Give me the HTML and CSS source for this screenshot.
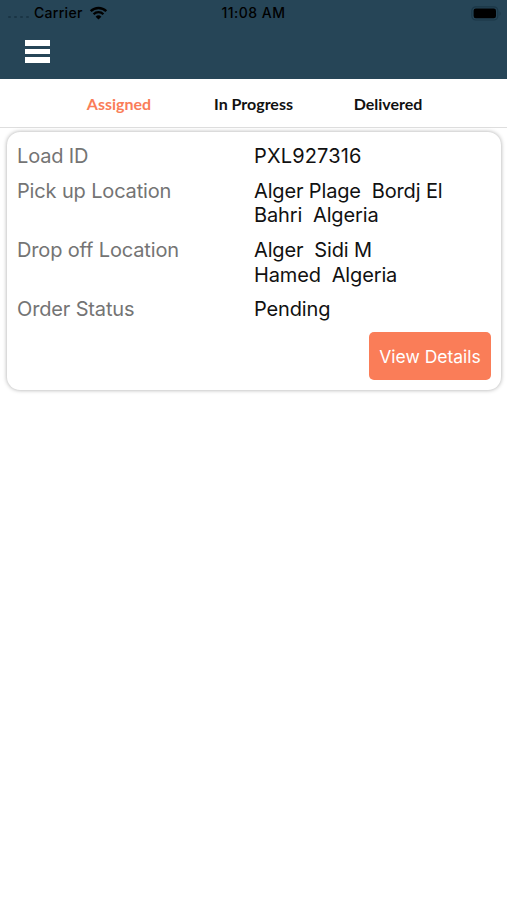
FILE: index.html
```
<!DOCTYPE html>
<html lang="en">
<head>
    <meta charset="UTF-8">
    <meta name="viewport" content="width=device-width, initial-scale=1.0">
    <title>Loads</title>
    <link rel="stylesheet" href="styles.css">
</head>
<body>

    <header class="header">
        <div class="status-bar">
            <div class="carrier">
                <span class="signal"><i></i><i></i><i></i><i></i></span>
                <span class="carrier-name">Carrier</span>
                <svg class="wifi" width="19" height="14" viewBox="0 0 18 14">
                    <path d="M1.2 5.1a11.2 11.2 0 0 1 15.6 0" fill="none" stroke="#000" stroke-width="2.4"/>
                    <path d="M4.1 8.2a7 7 0 0 1 9.8 0" fill="none" stroke="#000" stroke-width="2.3"/>
                    <path d="M9 13.6L6.1 10.7a4.1 4.1 0 0 1 5.8 0z"/>
                </svg>
            </div>
            <span class="time">11:08 AM</span>
            <div class="battery">
                <svg width="31" height="15" viewBox="0 0 31 15">
                    <rect x=".8" y=".8" width="26" height="13.2" rx="4" fill="none" stroke="#1b3747" stroke-width="1.2"/>
                    <rect x="2.6" y="2.6" width="22.4" height="9.6" rx="2.2"/>
                    <path d="M28.6 5.2q2 2.3 0 4.6z" fill="#1b3747"/>
                </svg>
            </div>
        </div>
        <button class="menu-btn" aria-label="Menu"><span></span><span></span><span></span></button>
    </header>

    <nav class="tabs">
        <a class="tab active">Assigned</a>
        <a class="tab">In Progress</a>
        <a class="tab">Delivered</a>
    </nav>

    <main class="card">
        <dl class="details">
            <dt>Load ID</dt>
            <dd class="load-id">PXL927316</dd>
            <dt>Pick up Location</dt>
            <dd>Alger Plage  Bordj El
Bahri  Algeria</dd>
            <dt>Drop off Location</dt>
            <dd>Alger  Sidi M
Hamed  Algeria</dd>
            <dt>Order Status</dt>
            <dd>Pending</dd>
        </dl>
        <button class="details-btn">View Details</button>
    </main>

</body>
</html>
```

FILE: styles.css
```
* {
    box-sizing: border-box;
}

body {
    margin: 0;
    min-height: 100vh;
    background-color: #fff;
    font-family: Inter, "Liberation Sans", sans-serif;
}

.header {
    height: 79px;
    background-color: #264557;
}

.status-bar {
    display: grid;
    grid-template-columns: 1fr auto 1fr;
    align-items: center;
    height: 26px;
    padding: 0 5px 0 8px;
    font-size: 14px;
    font-weight: 500;
    color: #000;
}

.carrier {
    display: flex;
    align-items: center;
}

.signal {
    display: flex;
    gap: 3px;
    width: 26px;
    padding-top: 8px;
}

.signal i {
    width: 3px;
    height: 2px;
    border-radius: 1px;
    background-color: #1a3544;
}

.carrier-name {
    margin-top: -1px;
    letter-spacing: 0.3px;
}

.wifi {
    margin-left: 6px;
}

.time {
    margin: -1px 3px 0 0;
    letter-spacing: 0.5px;
}

.battery {
    display: flex;
    justify-content: flex-end;
}

.menu-btn {
    display: flex;
    flex-direction: column;
    gap: 3px;
    margin: 14px 0 0 25px;
    padding: 0;
    border: none;
    background: none;
}

.menu-btn span {
    width: 25px;
    height: 5.6px;
    background-color: #fff;
}

.tabs {
    display: flex;
    justify-content: center;
    height: 49px;
    border-bottom: 1px solid #dedede;
    line-height: 50px;
    font-family: Lato, sans-serif;
    font-size: 16px;
    font-weight: 700;
}

.tab {
    width: 134.5px;
    text-align: center;
    color: #111;
}

.tab.active {
    color: #fa7d58;
}

.card {
    display: flex;
    flex-direction: column;
    height: 258px;
    margin: 4px 6px 0 7px;
    padding: 12px 10px 10px;
    border-radius: 13px;
    background-color: #fff;
    box-shadow: 0 0 4px rgba(0, 0, 0, 0.35);
}

.details {
    display: grid;
    grid-template-columns: 237px 1fr;
    row-gap: 10.3px;
    margin: 0;
    font-size: 20px;
    line-height: 24.5px;
    letter-spacing: -0.15px;
}

.details dt {
    color: #747474;
}

.details dd {
    margin: 0;
    color: #111;
    white-space: pre;
}

.details .load-id {
    letter-spacing: 0.15px;
}

.details-btn {
    align-self: flex-end;
    width: 122px;
    height: 48px;
    margin-top: auto;
    padding: 0;
    border: none;
    border-radius: 5px;
    background-color: #fa7d58;
    color: #fff;
    font-family: inherit;
    font-size: 17.5px;
}
```
